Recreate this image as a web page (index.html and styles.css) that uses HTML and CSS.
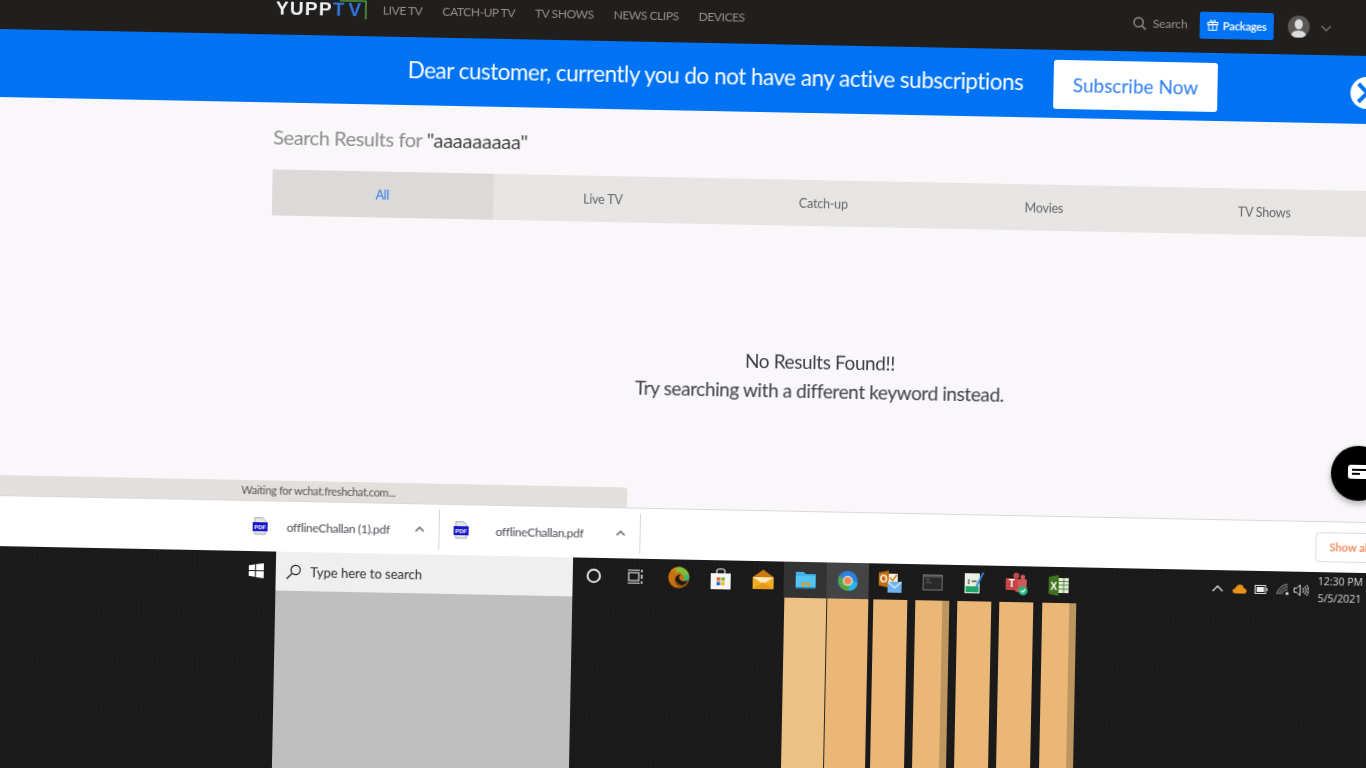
FILE: index.html
```html
<!DOCTYPE HTML PUBLIC "-//W3C//DTD HTML 4.01//EN" "http://www.w3.org/TR/html4/strict.dtd">
<HTML>
<HEAD>
<META HTTP-EQUIV="Content-type" CONTENT="text/html; charset=utf-8">
<TITLE>YuppTV Search Results</TITLE>
<link rel="stylesheet" href="styles.css">
</HEAD>
<BODY>

<DIV CLASS="stage">

<DIV CLASS="topbar">
<DIV CLASS="logo"><SPAN CLASS="logo-white">YUPP</SPAN><SPAN CLASS="logo-blue">TV</SPAN>
<svg class="logo-mark" width="28" height="22" viewBox="0 0 28 22"><path d="M0 1H26V19" fill="none" stroke="#4f9a3c" stroke-width="1.6"/></svg>
</DIV>
<DIV CLASS="nav">
<A CLASS="navlink">LIVE TV</A>
<A CLASS="navlink">CATCH-UP TV</A>
<A CLASS="navlink">TV SHOWS</A>
<A CLASS="navlink">NEWS CLIPS</A>
<A CLASS="navlink">DEVICES</A>
</DIV>
<DIV CLASS="account">
<DIV CLASS="search-link">
<svg width="14" height="14" viewBox="0 0 14 14"><circle cx="5.8" cy="5.8" r="4.6" fill="none" stroke="#9c948d" stroke-width="1.4"/><path d="M9.2 9.2L13 13" stroke="#9c948d" stroke-width="1.6"/></svg>
Search</DIV>
<DIV CLASS="packages">
<svg width="12" height="12" viewBox="0 0 12 12" fill="none" stroke="#fff" stroke-width="1"><rect x="1" y="3.5" width="10" height="2.2"/><rect x="2" y="5.7" width="8" height="5.6"/><path d="M6 3.5V11.3M6 3.5C4 3.5 3 2.5 3.6 1.4C4.4.6 5.6 2 6 3.5C6.4 2 7.6.6 8.4 1.4C9 2.5 8 3.5 6 3.5"/></svg>
Packages</DIV>
<DIV CLASS="avatar">
<svg width="22" height="22" viewBox="0 0 22 22"><circle cx="11" cy="11" r="11" fill="#5a5856"/><ellipse cx="11" cy="8.6" rx="4.1" ry="5.2" fill="#dcdcdc"/><path d="M3.5 19.5C5 15.5 8 15 11 15S17 15.5 18.5 19.5A11 11 0 0 1 3.5 19.5Z" fill="#dcdcdc"/></svg>
</DIV>
<svg class="account-arrow" width="11" height="7" viewBox="0 0 11 7"><path d="M1 1L5.5 5.5L10 1" fill="none" stroke="#77716c" stroke-width="1.4"/></svg>
</DIV>
</DIV>

<DIV CLASS="banner">
<DIV CLASS="banner-text">Dear customer, currently you do not have any active subscriptions</DIV>
<DIV CLASS="subscribe">Subscribe Now</DIV>
<DIV CLASS="banner-close">
<svg width="34" height="32" viewBox="0 0 34 32"><circle cx="16" cy="16" r="16" fill="#fff"/><path d="M8 7L26 25M26 7L8 25" stroke="#0073f4" stroke-width="4"/></svg>
</DIV>
</DIV>

<DIV CLASS="results">
<DIV CLASS="results-title">Search Results for <SPAN CLASS="results-query">"aaaaaaaaa"</SPAN></DIV>
<DIV CLASS="tabs">
<DIV CLASS="tab tab-active">All</DIV>
<DIV CLASS="tab">Live TV</DIV>
<DIV CLASS="tab">Catch-up</DIV>
<DIV CLASS="tab">Movies</DIV>
<DIV CLASS="tab">TV Shows</DIV>
</DIV>
<DIV CLASS="empty">No Results Found!!<BR>Try searching with a different keyword instead.</DIV>
</DIV>

<DIV CLASS="status">Waiting for wchat.freshchat.com...</DIV>

<DIV CLASS="shelf">
<DIV CLASS="download download-first">
<svg width="15" height="18" viewBox="0 0 15 18"><path d="M2 .5H10L13 3.5V17H2Z" fill="#e6e6e6" stroke="#9a9a9a" stroke-width=".8"/><rect y="5" width="15" height="9" fill="#1616c8"/><text x="7.5" y="12" class="pdf-label">PDF</text></svg>
<SPAN CLASS="download-name">offlineChallan (1).pdf</SPAN>
<svg class="download-arrow" width="10" height="6" viewBox="0 0 10 6"><path d="M1 5L5 1L9 5" fill="none" stroke="#666" stroke-width="1.5"/></svg>
</DIV>
<DIV CLASS="download download-second">
<svg width="15" height="18" viewBox="0 0 15 18"><path d="M2 .5H10L13 3.5V17H2Z" fill="#e6e6e6" stroke="#9a9a9a" stroke-width=".8"/><rect y="5" width="15" height="9" fill="#1616c8"/><text x="7.5" y="12" class="pdf-label">PDF</text></svg>
<SPAN CLASS="download-name">offlineChallan.pdf</SPAN>
<svg class="download-arrow" width="10" height="6" viewBox="0 0 10 6"><path d="M1 5L5 1L9 5" fill="none" stroke="#666" stroke-width="1.5"/></svg>
</DIV>
<DIV CLASS="show-all">Show all</DIV>
</DIV>

<DIV CLASS="taskbar">
<DIV CLASS="start">
<svg width="15" height="15" viewBox="0 0 15 15" fill="#fff"><path d="M0 2.2L6.2 1.2V7H0ZM7.2 1L15 0V7H7.2ZM0 8H6.2V13.8L0 12.8ZM7.2 8H15V15L7.2 14Z"/></svg>
</DIV>
<DIV CLASS="searchcol">
<DIV CLASS="searchbox">
<svg width="16" height="16" viewBox="0 0 16 16"><circle cx="9.8" cy="6" r="4.6" fill="none" stroke="#222" stroke-width="1.2"/><path d="M6.4 9.4L1 15" stroke="#222" stroke-width="1.3"/></svg>
Type here to search</DIV>
<DIV CLASS="searchfill"></DIV>
</DIV>
<DIV CLASS="appcol">
<DIV CLASS="apps">
<DIV CLASS="app"><svg width="16" height="16" viewBox="0 0 16 16"><circle cx="8" cy="8" r="6.2" fill="none" stroke="#e4e4e4" stroke-width="2"/></svg></DIV>
<DIV CLASS="app"><svg class="app-taskview" width="16" height="16" viewBox="0 0 16 16" fill="none" stroke="#ddd" stroke-width="1.2"><rect x="2" y="4" width="10" height="8"/><path d="M1 1.5H13M1 14.5H13"/><path d="M15 1V3.5M15 6V10M15 12.5V15" stroke-width="1.6"/></svg></DIV>
<DIV CLASS="app"><svg width="22" height="22" viewBox="0 0 22 22"><circle cx="11" cy="11" r="10.5" fill="#c9700f"/><path d="M2 6C4 2.500 7.500 .5 11 .5C13 .5 14 1 15 1.500C10 1.500 5 3 2 6Z" fill="#e09a1c"/><path d="M11 .5C17 .5 21.500 5 21.500 10.500C21.500 13.500 18.500 14.500 16 14C17 11.500 16.500 8.500 14 7C12 5.500 9.500 5.500 7 6.500C8 3 9.500 1 11 .5Z" fill="#7fbf3a"/><path d="M21.500 10.500C21.500 13.500 18.500 14.500 16 14C17 12 17 10 16 8.500C18 8 20 8.500 21.500 10.500Z" fill="#38b77a"/><path d="M20 13.500C17.500 15.500 12.500 15 11.500 12C10.800 10 12 8.500 13.500 8C10 7.500 7.500 10 7.500 13C7.500 17 12 20 16 18.500C18 17.500 19.500 15.500 20 13.500Z" fill="#1a1a1a"/><path d="M9 15C10.500 18 14 19.500 17 18.500C14.500 21 9.500 20.500 7.500 17Z" fill="#8a4a0a"/></svg></DIV>
<DIV CLASS="app"><svg width="20" height="23" viewBox="0 0 20 23"><path d="M6 6V3.500C6 1 14 1 14 3.500V6" fill="none" stroke="#ddd" stroke-width="1.300"/><rect y="6" width="20" height="16" fill="#f4f4f4"/><rect x="6" y="10" width="3.500" height="3.500" fill="#e8622c"/><rect x="10.500" y="10" width="3.500" height="3.500" fill="#7cb52a"/><rect x="6" y="14.500" width="3.500" height="3.500" fill="#2a68d8"/><rect x="10.500" y="14.500" width="3.500" height="3.500" fill="#f2b51c"/></svg></DIV>
<DIV CLASS="app"><svg width="21" height="21" viewBox="0 0 21 21"><path d="M0 8L10.500 .5L21 8V20H0Z" fill="#c97a12"/><path d="M0 8H21V20H0Z" fill="#f0ac24"/><path d="M0 8L10.500 15L21 8" fill="#fbe7b8"/><path d="M0 20L10.500 13L21 20Z" fill="#e49a18"/></svg></DIV>
<DIV CLASS="app app-open"><svg width="20" height="18" viewBox="0 0 20 18"><path d="M0 1H8L10 3H20V17H0Z" fill="#3fb4e8"/><path d="M0 5H20V17H0Z" fill="#54c4f2"/><path d="M6 16V11.500H14V16H12V13.500H8V16Z" fill="#dd9a2a"/><rect x="0" y="16" width="20" height="1.500" fill="#2a8fc8"/></svg></DIV>
<DIV CLASS="app app-current"><svg width="20" height="20" viewBox="0 0 20 20"><circle cx="10" cy="10" r="10" fill="#2d7fe0"/><path d="M1.500 5C0 9 .5 14 4 17C6 19 8.500 20 11 20L14 13L5 8Z" fill="#58a83c"/><path d="M11 20C15 20 19 17.500 20 12.500L15 9L12 13Z" fill="#27b7e6"/><circle cx="10" cy="10" r="5" fill="#e6e6e6"/><circle cx="10" cy="10" r="3.800" fill="#ec8a54"/></svg></DIV>
<DIV CLASS="app"><svg width="23" height="23" viewBox="0 0 23 23"><path d="M0 2L10 0V17L0 15Z" fill="#c46c08"/><text x="5" y="12" class="app-letter">O</text><rect x="10" y="3" width="9" height="9" fill="#f4f0e8"/><path d="M11 7L14 10L18 4" fill="none" stroke="#d87a10" stroke-width="1.400"/><rect x="9" y="11" width="14" height="11" fill="#6db2ec"/><path d="M9 11L16 17L23 11" fill="none" stroke="#e4f2fc" stroke-width="1.200"/></svg></DIV>
<DIV CLASS="app"><svg width="20" height="16" viewBox="0 0 20 16"><rect x=".5" y=".5" width="19" height="15" fill="#2a2a2a" stroke="#77736f"/><rect x="1" y="1" width="18" height="2" fill="#55514e"/><path d="M3 5H7M3 8H9" stroke="#666" stroke-width="1"/></svg></DIV>
<DIV CLASS="app"><svg width="20" height="22" viewBox="0 0 20 22"><rect x="0" y="1" width="15" height="20" fill="#eaf0e6"/><rect x="1" y="14" width="13" height="6" fill="#1fa765"/><path d="M4 7V12M7 9H12" stroke="#555" stroke-width="1.300"/><path d="M19 0L13 13L11.500 15L12 12.500L18 0Z" fill="#2e86d8" stroke="#2e86d8"/></svg></DIV>
<DIV CLASS="app"><svg width="23" height="24" viewBox="0 0 23 24"><circle cx="10.500" cy="3.500" r="3" fill="#bf4a4a"/><circle cx="17" cy="5" r="2.400" fill="#cf5c5c"/><path d="M8 7H21V16C21 20 17 20 14 20C10 20 8 18 8 15Z" fill="#cd5a5a"/><rect x="0" y="6" width="12" height="12" rx="1" fill="#c34545"/><text x="6" y="15.500" class="app-letter">T</text><circle cx="17.500" cy="18.500" r="4.500" fill="#25b982"/><path d="M15.500 18.500L17 20L19.800 17" fill="none" stroke="#fff" stroke-width="1.200"/></svg></DIV>
<DIV CLASS="app"><svg width="20" height="21" viewBox="0 0 20 21"><path d="M0 2L10 0V21L0 19Z" fill="#3f7420"/><text x="5" y="14.500" class="app-letter">X</text><rect x="10" y="3" width="10" height="15" fill="#e4eedc"/><path d="M10 6.500H20M10 10H20M10 14H20M15 3V18" stroke="#3f7420" stroke-width=".8"/></svg></DIV>
<DIV CLASS="tray">
<svg class="tray-caret" width="12" height="7" viewBox="0 0 12 7"><path d="M1 6L6 1L11 6" fill="none" stroke="#ddd" stroke-width="1.300"/></svg>
<svg class="tray-cloud" width="14" height="9" viewBox="0 0 14 9"><path d="M3 9C1 9 0 8 0 6.500C0 5 1 4 2.500 4C3.500 1.500 5.500 0 7.500 0C9.500 0 11 1.500 11 3.500C13 3.500 14 5 14 6.500C14 8 13 9 11.500 9Z" fill="#e89418"/></svg>
<svg class="tray-battery" width="13" height="9" viewBox="0 0 13 9"><rect x=".5" y=".5" width="10.500" height="8" fill="none" stroke="#ddd"/><rect x="2" y="2" width="7.500" height="5" fill="#eee"/><rect x="11.500" y="3" width="1.500" height="3" fill="#bbb"/></svg>
<svg class="tray-wifi" width="13" height="12" viewBox="0 0 13 12" fill="none" stroke="#bbb" stroke-width=".9"><path d="M.5 11C.8 6 5 1.500 11 1M2.800 11C3 7.500 6 4 11 3.500M5 11C5.200 9 7 6.500 11 6"/><circle cx="10.500" cy="10" r="1.500" fill="#eee" stroke="none"/></svg>
<svg class="tray-sound" width="15" height="13" viewBox="0 0 15 13" fill="none" stroke="#ddd" stroke-width="1"><path d="M.5 4.500H3L6.500 1V12L3 8.500H.5Z"/><path d="M9 4C10 5.500 10 7.500 9 9M11 2.500C12.800 5 12.800 8 11 10.500M13 1C15.200 4.500 15.200 8.500 13 12"/></svg>
<DIV CLASS="clock">12:30 PM<BR>5/5/2021</DIV>
</DIV>
</DIV>
<DIV CLASS="thumbs">
<DIV CLASS="thumb thumb-open"></DIV>
<DIV CLASS="thumb thumb-current"></DIV>
<DIV CLASS="thumb"></DIV>
<DIV CLASS="thumb thumb-edged"></DIV>
<DIV CLASS="thumb"></DIV>
<DIV CLASS="thumb"></DIV>
<DIV CLASS="thumb thumb-edged"></DIV>
</DIV>
</DIV>
</DIV>

<DIV CLASS="chat">
<svg width="22" height="17" viewBox="0 0 22 17"><path d="M3 0H22V14H3C1 14 0 13 0 11V3C0 1 1 0 3 0Z" fill="#fff"/><path d="M4 5H18" stroke="#000" stroke-width="2"/><path d="M4 9H12" stroke="#000" stroke-width="2"/></svg>
</DIV>

</DIV>

</BODY>
</HTML>
```

FILE: styles.css
```css
html, body
  {
	margin : 0;
	height : 100%;
	overflow : hidden;
	background-color : #1a1a1a;
  } /*html, body*/

/* the whole screen was photographed at a slight tilt */
div.stage
  {
	position : relative;
	width : 1400px;
	height : 768px;
	display : flex;
	flex-direction : column;
	background-color : #f9f7f9;
	font-family : "Lato", "Liberation Sans", sans-serif;
	transform : rotate(1.13deg);
	transform-origin : 0 0;
	filter : blur(0.35px);
  } /*div.stage*/

div.topbar
  {
	flex : none;
	box-sizing : border-box;
	height : 69px;
	margin-top : -40px;
	padding : 16px 0 0 276px;
	display : flex;
	align-items : center;
	background-color : #211e1e;
  } /*div.topbar*/
div.logo
  {
	position : relative;
	width : 107px;
	line-height : 14px;
	font-family : "Liberation Sans", sans-serif;
	font-size : 19px;
	font-weight : bold;
  } /*div.logo*/
span.logo-white
  {
	color : #f2f2f2;
	letter-spacing : 1.3px;
  } /*span.logo-white*/
span.logo-blue
  {
	color : #2f74d8;
	letter-spacing : 4px;
  } /*span.logo-blue*/
svg.logo-mark
  {
	position : absolute;
	left : 64px;
	top : -3px;
  } /*svg.logo-mark*/
div.nav
  {
	display : flex;
	gap : 20px;
	margin-top : -1px;
  } /*div.nav*/
a.navlink
  {
	font-size : 12px;
	letter-spacing : -0.42px;
	color : #998f87;
	white-space : nowrap;
  } /*a.navlink*/
div.account
  {
	margin-left : auto;
	margin-right : 68px;
	margin-bottom : 3px;
	display : flex;
	align-items : center;
  } /*div.account*/
div.search-link
  {
	display : flex;
	align-items : center;
	gap : 6px;
	width : 67px;
	margin-bottom : 1px;
	font-size : 12px;
	letter-spacing : -0.1px;
	color : #9c948d;
  } /*div.search-link*/
div.packages
  {
	box-sizing : border-box;
	width : 74px;
	height : 27px;
	display : flex;
	align-items : center;
	justify-content : center;
	gap : 4px;
	border-radius : 2px;
	background-color : #0073f4;
	color : #f0f6ff;
	font-size : 11px;
	font-weight : bold;
	letter-spacing : -0.2px;
  } /*div.packages*/
div.avatar
  {
	width : 22px;
	height : 22px;
	margin-left : 14px;
  } /*div.avatar*/
svg.account-arrow
  {
	margin-left : 11px;
	margin-top : 3px;
  } /*svg.account-arrow*/

div.banner
  {
	flex : none;
	position : relative;
	height : 68px;
	padding-left : 409px;
	display : flex;
	align-items : center;
	background-color : #0073f4;
	color : #ffffff;
	box-sizing : border-box;
  } /*div.banner*/
div.banner-text
  {
	width : 646px;
	margin-bottom : 3px;
	font-size : 22.5px;
	letter-spacing : -0.5px;
	white-space : nowrap;
  } /*div.banner-text*/
div.subscribe
  {
	width : 164px;
	height : 49px;
	line-height : 49px;
	text-align : center;
	border-radius : 3px;
	background-color : #ffffff;
	color : #2c7bf0;
	font-size : 19px;
  } /*div.subscribe*/
div.banner-close
  {
	position : absolute;
	left : 1352px;
	top : 21px;
	width : 34px;
	height : 32px;
  } /*div.banner-close*/

div.results
  {
	flex : none;
	box-sizing : border-box;
	height : 378px;
	padding : 19px 0 0 276px;
  } /*div.results*/
div.results-title
  {
	height : 30px;
	line-height : 30px;
	font-size : 20px;
	letter-spacing : -0.45px;
	color : #8b8b8b;
  } /*div.results-title*/
span.results-query
  {
	color : #444444;
	letter-spacing : -0.25px;
  } /*span.results-query*/
div.tabs
  {
	margin-top : 18px;
	display : flex;
  } /*div.tabs*/
div.tab
  {
	box-sizing : border-box;
	width : 220.5px;
	height : 46px;
	padding-top : 1px;
	line-height : 46px;
	text-align : center;
	font-size : 12.5px;
	letter-spacing : -0.2px;
	color : #666666;
	background-color : #e6e5e4;
  } /*div.tab*/
div.tab-active
  {
	color : #2c7bf0;
	background-color : #dcd9d9;
  } /*div.tab-active*/
div.empty
  {
	width : 1102px;
	margin-top : 121px;
	text-align : center;
	font-size : 19px;
	letter-spacing : -0.4px;
	line-height : 29px;
	color : #3e3e46;
  } /*div.empty*/

div.status
  {
	flex : none;
	box-sizing : border-box;
	width : 637px;
	height : 20px;
	line-height : 20px;
	padding-left : 251px;
	border-top-right-radius : 4px;
	background-color : #e3dfdc;
	font-size : 11px;
	letter-spacing : -0.3px;
	color : #555555;
  } /*div.status*/

div.shelf
  {
	flex : none;
	box-sizing : border-box;
	height : 51px;
	padding-left : 263px;
	display : flex;
	align-items : center;
	background-color : #ffffff;
	border-top : 1px solid #dad8d8;
  } /*div.shelf*/
div.download
  {
	flex : none;
	box-sizing : border-box;
	height : 40px;
	display : flex;
	align-items : center;
	border-right : 1px solid #d5d5d5;
	font-size : 12px;
	letter-spacing : -0.3px;
	color : #4a4a55;
  } /*div.download*/
div.download-first
  {
	width : 187px;
  } /*div.download-first*/
div.download-second
  {
	width : 201px;
	padding-left : 14px;
  } /*div.download-second*/
span.download-name
  {
	margin-left : 19px;
  } /*span.download-name*/
div.download-second span.download-name
  {
	margin-left : 27px;
  } /*div.download-second span.download-name*/
svg.download-arrow
  {
	margin-left : auto;
	margin-right : 14px;
  } /*svg.download-arrow*/
.pdf-label
  {
	font-family : "Liberation Sans", sans-serif;
	font-size : 6px;
	font-weight : bold;
	letter-spacing : 0;
	fill : #ffffff;
	text-anchor : middle;
  } /*.pdf-label*/
div.show-all
  {
	flex : none;
	box-sizing : border-box;
	width : 70px;
	height : 30px;
	line-height : 28px;
	margin-left : 675px;
	padding-left : 13px;
	border : 1px solid #dedbd8;
	border-radius : 4px;
	font-size : 11px;
	font-weight : bold;
	color : #ef8a5e;
  } /*div.show-all*/

div.taskbar
  {
	flex : 1;
	display : flex;
	min-height : 0;
	background-color : #1a1a1a;
	background-image : repeating-linear-gradient(90deg, rgba(255,255,255,0.012) 0 1px, transparent 1px 5px);
  } /*div.taskbar*/
div.start
  {
	box-sizing : border-box;
	width : 286.5px;
	height : 38px;
	padding : 11px 0 0 260px;
  } /*div.start*/
div.searchcol
  {
	width : 297.5px;
	display : flex;
	flex-direction : column;
  } /*div.searchcol*/
div.searchbox
  {
	flex : none;
	box-sizing : border-box;
	height : 39px;
	padding-left : 10px;
	display : flex;
	align-items : center;
	gap : 9px;
	background-color : #efefef;
	font-size : 13px;
	color : #2a2a2a;
  } /*div.searchbox*/
div.searchfill
  {
	flex : 1;
	background-color : #bfbfbf;
  } /*div.searchfill*/
div.appcol
  {
	flex : 1;
	display : flex;
	flex-direction : column;
  } /*div.appcol*/
div.apps
  {
	flex : none;
	height : 36px;
	display : flex;
  } /*div.apps*/
div.app
  {
	flex : none;
	width : 42.3px;
	display : flex;
	align-items : center;
	justify-content : center;
  } /*div.app*/
svg.app-taskview
  {
	margin-right : 2px;
  } /*svg.app-taskview*/
div.app-open
  {
	background-color : #333333;
  } /*div.app-open*/
div.app-current
  {
	background-color : #444444;
  } /*div.app-current*/
.app-letter
  {
	font-family : "Liberation Sans", sans-serif;
	font-size : 10px;
	font-weight : bold;
	fill : #ffffff;
	text-anchor : middle;
  } /*.app-letter*/
div.tray
  {
	margin-left : auto;
	margin-right : 27px;
	display : flex;
	align-items : center;
  } /*div.tray*/
svg.tray-cloud
  {
	margin-left : 9px;
  } /*svg.tray-cloud*/
svg.tray-battery
  {
	margin-left : 8px;
  } /*svg.tray-battery*/
svg.tray-wifi
  {
	margin-left : 9px;
  } /*svg.tray-wifi*/
svg.tray-sound
  {
	margin-left : 4px;
  } /*svg.tray-sound*/
div.clock
  {
	margin-left : 9px;
	width : 44px;
	text-align : center;
	font-family : "Open Sans", sans-serif;
	font-size : 10.5px;
	line-height : 17px;
	color : #d8d8d8;
	white-space : nowrap;
  } /*div.clock*/
div.thumbs
  {
	flex : 1;
	display : flex;
	gap : 8.25px;
	margin-left : 212px;
  } /*div.thumbs*/
div.thumb
  {
	box-sizing : border-box;
	width : 34px;
	background-color : #ebb777;
  } /*div.thumb*/
div.thumb-open
  {
	width : 42px;
	margin-right : -8.25px;
	background-color : #edc084;
  } /*div.thumb-open*/
div.thumb-current
  {
	width : 42px;
	margin-right : -3.75px;
	border-left : 1px solid #2a2620;
  } /*div.thumb-current*/
div.thumb-edged
  {
	border-right : 7px solid #bc955f;
  } /*div.thumb-edged*/

div.chat
  {
	position : absolute;
	left : 1340px;
	top : 419px;
	width : 55px;
	height : 55px;
	padding : 19px 0 0 17px;
	box-sizing : border-box;
	border-radius : 50%;
	background-color : #000000;
	box-shadow : 0 3px 6px rgba(0,0,0,0.3);
  } /*div.chat*/
```
